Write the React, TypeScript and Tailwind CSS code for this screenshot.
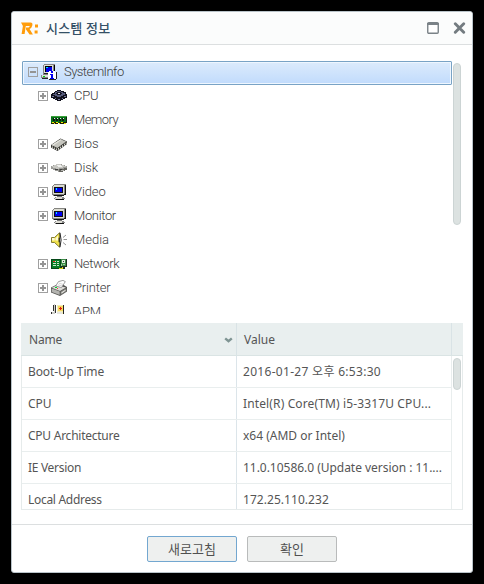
import React from "react";

const tree = "font-['Roboto','Liberation_Sans',sans-serif] font-light";
const ui = "font-['Noto_Sans','Noto_Sans_CJK_KR',sans-serif]";

function Icon({ children, smooth }: { children: React.ReactNode; smooth?: boolean }) {
  return (
    <svg width="16" height="16" viewBox="0 0 16 16" shapeRendering={smooth ? "auto" : "crispEdges"} className="shrink-0">
      {children}
    </svg>
  );
}

const SystemIcon = () => (
  <Icon>
    <path d="M3 0h11v1h-1v9H2V1h1z" fill="#848484" />
    <path d="M3 1h9v8H3z" fill="#dededa" />
    <path d="M13 1h1v8h-1zM3 10h10v1H3z" fill="#000" />
    <path d="M4 2h7v6H4z" fill="#000" />
    <path d="M5 3h6v5H5z" fill="#0000e8" />
    <path d="M5 3h2v1H5z" fill="#00e0ff" />
    <path d="M2 10h6v1H2zM0 11h8v3H0z" fill="#848484" />
    <path d="M1 11h7v2H1z" fill="#dededa" />
    <path d="M1 14h7v1H1zM3 9h8v1H3z" fill="#222" />
    <path d="M2 12h2v1H2z" fill="#00d800" />
    <path d="M8 7h6v1h1v7h-1v1H8v-1H7V8h1z" fill="#fff" />
    <path d="M15 8h1v7h-1zM8 15h7v1H8z" fill="#222" />
    <path d="M10 7h2v2h-2zM9 10h3v4h1v1H9v-1h1v-3H9z" fill="#0000f0" />
  </Icon>
);
const CpuIcon = () => (
  <Icon>
    <path d="M6 2h4v1h3v1h2v2h1v4h-2v1h-2v1h-2v1H6v-1H4v-1H2v-1H0V6h1V5h2V4h1V3h2z" fill="#10101c" />
    <path d="M6 3h4v1h2v1h2v2h-2v1h-2v1H6V8H4V7H2V6h2V4h2z" fill="#565b7d" />
    <path d="M6 4h4v1h1v1h-1v1H6V6H5V5h1z" fill="#171726" />
    <path d="M7 5h2v1H7z" fill="#dedee8" />
    <path d="M1 8h2v1H1zM4 10h1v1H4zM7 11h2v1H7zM11 10h1v1h-1zM13 8h2v1h-2z" fill="#7779a0" />
  </Icon>
);
const MemoryIcon = () => (
  <Icon>
    <path d="M0 4h16v7H0z" fill="#087018" />
    <path d="M0 4h16v1H0z" fill="#38a038" />
    <path d="M2 6h2v3H2zM5 6h2v3H5zM8 6h2v3H8zM11 6h2v3h-2z" fill="#101810" />
    <path d="M3 6h1v1H3zM6 6h1v1H6zM9 6h1v1H9zM12 6h1v1h-1z" fill="#e8eee8" />
    <path d="M0 11h1v1H0zM1 10h6v2H1zM8 10h7v2H8z" fill="#202008" />
    <path d="M1 10h2v1H1zM3 11h1v1H3zM5 10h2v1H5zM8 11h1v1H8zM10 10h2v1h-2zM13 11h2v1h-2z" fill="#f4e800" />
    <path d="M15 5h1v6h-1z" fill="#102010" />
  </Icon>
);
const BiosIcon = () => (
  <Icon smooth>
    <path d="M0 9 9.5 2.5 16 5.5V8L6.5 15 0 11.5Z" fill="#3a3a36" />
    <path d="M.6 9 9.6 3.2 15.2 5.6 6.3 12Z" fill="#c6c6bf" />
    <path d="M.6 9 9.6 3.2 10.8 3.8 2 9.8Z" fill="#e5e5df" />
    <path d="M1.5 10.5v1.3M3.5 11.6v1.3M5.5 12.5v1.5M7.5 12v1.8M9.5 10.6v1.8M11.5 9.2V11M13.5 7.7v1.8M15.2 6.6V8" stroke="#e6e6de" strokeWidth=".9" />
  </Icon>
);
const DiskIcon = () => (
  <Icon>
    <path d="M5 4h6v1h3v1h2v4h-2v1h-2v1H7v-1H4v-1H2V9H0V6h2V5h3z" fill="#9c9c98" />
    <path d="M5 4h5v1h3v1h2v1h-3v1H8v1H5V8H2V7H1V6h2V5h2z" fill="#c8c8c3" />
    <path d="M6 5h4v1h1v1H7V6H6z" fill="#f0f0ee" />
    <path d="M8 9h5V8h3v2h-2v1h-2v1H8z" fill="#64645f" />
    <path d="M4 9h3v1H4zM9 9h2v1H9z" fill="#3e3e3e" />
    <path d="M10 10h3v1h-3z" fill="#b5b5b0" />
  </Icon>
);
const MonitorIcon = () => (
  <Icon>
    <path d="M3 0h12v1h-1v10h-2v1H2v-1H1V2h1V1h1z" fill="#848480" />
    <path d="M3 1h10v9H2V2h1z" fill="#dcdcd2" />
    <path d="M14 1h1v10h-1zM13 10h1v1h-1zM3 11h10v1H3z" fill="#111" />
    <path d="M3 3h9v6H3z" fill="#101010" />
    <path d="M4 4h7v4H4z" fill="#0000ee" />
    <path d="M5 4h1v2H5z" fill="#00e5ff" />
    <path d="M6 12h5v1H6z" fill="#777" />
    <path d="M4 13h9v1h1v1h-1v1H4v-1H3v-1h1z" fill="#888" />
    <path d="M5 13h6v1H5zM4 14h7v1H4z" fill="#dddcd4" />
    <path d="M5 15h8v1H5z" fill="#111" />
  </Icon>
);
const MediaIcon = () => (
  <Icon smooth>
    <path d="M.5 5.5h3L8.5.8v14.4L3.5 10.5h-3Z" fill="#efe04a" stroke="#77702a" strokeWidth=".9" />
    <path d="M1 6h2.6v2.5H1ZM4.5 6.5 7 3.5v5H4.5Z" fill="#fffbd6" />
    <path d="M9 .8Q11.2 8 9 15.2" fill="#fff" stroke="#222" strokeWidth="1" />
    <path d="M8.2 5.8v4.4" stroke="#222" strokeWidth="1.2" />
    <path d="M12 5.5 15 3M12.5 7.5H16M12 10.5 15 13" stroke="#8a8a8a" strokeWidth=".9" />
  </Icon>
);
const NetworkIcon = () => (
  <Icon>
    <path d="M0 3h10v10H0z" fill="#064818" />
    <path d="M1 4h8v8H1z" fill="#087d24" />
    <path d="M2 5h3v1H2zM6 5h2v1H6zM2 7h3v1H2zM6 7h2v1H6zM2 9h3v1H2zM6 9h2v1H6z" fill="#c8e8c8" />
    <path d="M2 5h2v1H2z" fill="#ed2820" />
    <path d="M10 3h6v8h-2v2h-4z" fill="#1c3020" />
    <path d="M10 3h5v7h-5z" fill="#3c8c48" />
    <path d="M11 4h3v3h-3z" fill="#e5eee2" />
    <path d="M12 5h1v1h-1z" fill="#234f2d" />
    <path d="M10 8h1v2h-1zM12 8h2v1h-2z" fill="#9bcf9b" />
    <path d="M8 12h3v1H8zM11 11h1v2h-1z" fill="#ddd11a" />
  </Icon>
);
const PrinterIcon = () => (
  <Icon smooth>
    <path d="M0 7.5 5 5 11 4l5 3v4.5L9 16 0 12.5Z" fill="#555552" />
    <path d="M.7 7.7 6 5.2 15 7.5 9 11Z" fill="#dddcd8" />
    <path d="M.7 8.4 8.7 11.4V15L.7 12Z" fill="#b4b4b0" />
    <path d="M9.6 11.5 15.3 8.2v3L9.6 15Z" fill="#84847f" />
    <path d="M10.5 12.2 14.5 9.8v1L10.5 13.4Z" fill="#f0f0ec" />
    <path d="M4.7 6 7.5 1.6 12 .4l2.3 1.2L10.5 7.6Z" fill="#fff" stroke="#777" strokeWidth=".7" />
    <path d="M8 3.2 12 4.4M7 4.8 11 6" stroke="#bbb" strokeWidth=".6" />
    <path d="M4 7h2v1H4z" fill="#00d830" />
    <path d="M6 8h1v1H6z" fill="#ee4530" />
  </Icon>
);
const ApmIcon = () => (
  <Icon>
    <path d="M2 1h1v6H2zM4 1h1v8H4zM0 8h1v3H0z" fill="#333" />
    <path d="M3 0h1v9H3zM1 8h3v2H1z" fill="#d2d2cc" />
    <path d="M1 10h5v1H1z" fill="#888" />
    <path d="M6 1h7v14H6z" fill="#222" />
    <path d="M6 1h6v9H6z" fill="#f4eeb8" />
    <path d="M7 2h5v5H7z" fill="#f6d860" />
    <path d="M8 4h3v1H8zM9 3h1v3H9z" fill="#e02010" />
    <path d="M6 8h5v2H6z" fill="#e6e6e0" />
  </Icon>
);

function Expander({ open }: { open?: boolean }) {
  return (
    <svg width="10" height="10" viewBox="0 0 10 10" shapeRendering="crispEdges" className="shrink-0">
      <path d="M.5 .5h9v9h-9z" fill={open ? "none" : "#fff"} stroke="#a0a0a0" />
      <path d={open ? "M2 4h6v2H2z" : "M2 4h6v2H2zM4 2h2v6H4z"} fill="#949494" />
    </svg>
  );
}

const nodes = [
  { name: "CPU", icon: <CpuIcon />, more: true, track: "tracking-[-0.2px]" },
  { name: "Memory", icon: <MemoryIcon />, more: false, track: "tracking-[-0.55px]" },
  { name: "Bios", icon: <BiosIcon />, more: true, track: "tracking-[-0.1px]" },
  { name: "Disk", icon: <DiskIcon />, more: true, track: "tracking-[-0.1px]" },
  { name: "Video", icon: <MonitorIcon />, more: true, track: "tracking-[-0.1px]" },
  { name: "Monitor", icon: <MonitorIcon />, more: true, track: "tracking-[-0.35px]" },
  { name: "Media", icon: <MediaIcon />, more: false, track: "tracking-[0px]" },
  { name: "Network", icon: <NetworkIcon />, more: true, track: "tracking-[-0.4px]" },
  { name: "Printer", icon: <PrinterIcon />, more: true, track: "tracking-[-0.2px]" },
  { name: "APM", icon: <ApmIcon />, more: false, track: "tracking-[-0.2px]" },
];

const rows = [
  { name: "Boot-Up Time", value: "2016-01-27 오후 6:53:30", n: "tracking-[-0.12px]", v: "tracking-[0.3px]" },
  { name: "CPU", value: "Intel(R) Core(TM) i5-3317U CPU...", n: "tracking-[0px]", v: "tracking-[0.13px]" },
  { name: "CPU Architecture", value: "x64 (AMD or Intel)", n: "tracking-[-0.25px]", v: "tracking-[0px]" },
  { name: "IE Version", value: "11.0.10586.0 (Update version : 11....", n: "tracking-[-0.3px]", v: "tracking-[-0.03px]" },
  { name: "Local Address", value: "172.25.110.232", n: "tracking-[-0.3px]", v: "tracking-[0.05px]" },
];

export default function App() {
  return (
    <div className="h-[584px] w-[484px] bg-black p-[11px]">
      <div className={`${ui} flex h-[562px] w-[462px] flex-col overflow-hidden rounded-[3px] border border-[#b9c3c9] bg-white text-xs text-[#555]`}>
        <header className="flex h-[33px] shrink-0 items-center border-b border-[#dcdfe0] bg-[#fbfcfc] pl-[9px] pr-[5px]">
          <svg width="18" height="13" viewBox="0 0 18 13" className="mr-[7px]">
            <path d="M0 .6H9.5Q12 .6 11.3 3.6Q10.8 6 8.6 7L11.9 12.4H8.6L5 7.4V5.6H7.5Q8.6 5.4 8.7 4H4.8L3.6 12H.6L1.9 4Z" fill="#ff9c0a" />
            <path d="M14 2.6h3v3h-3zM13.6 8.5h3v3h-3z" fill="#ff9c0a" />
          </svg>
          <h1 className="-mt-px flex-1 text-[13px] font-medium leading-4 tracking-[0.2px] text-[#345066]">시스템 정보</h1>
          <svg width="12" height="12" viewBox="0 0 12 12" className="mr-[14px]">
            <rect x=".75" y=".75" width="10.5" height="10.5" rx="1" fill="#fff" stroke="#7a8287" strokeWidth="1.4" />
            <path d="M0 1h12v2H0z" fill="#7a8287" />
          </svg>
          <svg width="14" height="12" viewBox="0 0 14 12">
            <path d="M2.3 1.8 10.7 10.2M10.7 1.8 2.3 10.2" stroke="#737b80" strokeWidth="2.9" strokeLinecap="round" />
          </svg>
        </header>

        <main className="flex h-[479px] shrink-0 flex-col pl-[9px] pr-[10px] pt-4">
          <div className="flex h-[253px] shrink-0 gap-px overflow-hidden">
            <div className={`${tree} ml-px w-[430px] text-[13px] leading-4 text-[#3a3a3a]`}>
              <div className="flex h-6 items-center rounded-[1px] border border-[#79a3c5] bg-linear-to-b from-[#dcebfc] to-[#c1dbfc] pb-[2px] pl-[5px] shadow-[inset_0_0_0_1px_#eef6ff]">
                <Expander open />
                <span className="ml-[3px] mr-[7px]"><SystemIcon /></span>
                <span className="tracking-[-0.55px]">SystemInfo</span>
              </div>
              <ul className="-mt-px pl-4">
                {nodes.map((n) => (
                  <li key={n.name} className="flex h-6 items-center">
                    <span className="w-[13px]">{n.more && <Expander />}</span>
                    <span className="mr-[7px]">{n.icon}</span>
                    <span className={n.track}>{n.name}</span>
                  </li>
                ))}
              </ul>
            </div>
            <div className="mt-[2px] h-[162px] w-2 rounded-full border border-[#ccd4d4] bg-[#dce2e1]" />
          </div>

          <div className="mt-[9px] h-[187px] w-[442px] overflow-hidden border-b border-[#e6ebeb]">
            <div className="flex h-[33px] border-b border-[#dae4e4] bg-[#e9efef]">
              <div className="flex w-[216px] items-center justify-between border-r border-[#d9e3e6] pl-2 pr-[3px] pt-[2px]">
                <span className="tracking-[-0.2px]">Name</span>
                <svg width="9" height="6" viewBox="0 0 9 6"><path d="M1.2 1.3 4.5 4.2 7.8 1.3" fill="none" stroke="#7f9493" strokeWidth="2.4" /></svg>
              </div>
              <div className="flex w-[215px] items-center border-r border-[#d9e3e6] pl-[7px] pt-[2px]">Value</div>
            </div>
            <div className="flex border-x border-[#e6ebeb]">
              <div className="w-[430px]">
                {rows.map((r) => (
                  <div key={r.name} className="flex h-8 border-b border-[#e9eeee] leading-[31px]">
                    <div className="w-[215px] border-r border-[#dce5ea] pl-[6px]"><span className={r.n}>{r.name}</span></div>
                    <div className="w-[215px] whitespace-nowrap border-r border-[#e9eeee] pl-[6px]"><span className={r.v}>{r.value}</span></div>
                  </div>
                ))}
              </div>
              <div className="ml-px mt-[2px] h-8 w-2 rounded-full border border-[#ccd4d4] bg-[#dce2e1]" />
            </div>
          </div>
        </main>

        <footer className="flex flex-1 justify-center gap-[10px] border-t border-[#dcdfe0] pt-[11px]">
          <button className="h-[26px] w-[90px] rounded-[2px] border border-[#73a7d0] bg-[#eef0ef] text-[13px] leading-[23px] text-[#505050]">새로고침</button>
          <button className="h-[26px] w-[90px] rounded-[2px] border border-[#b9bbbb] bg-[#eef0ef] text-[13px] leading-[23px] text-[#505050]">확인</button>
        </footer>
      </div>
    </div>
  );
}
